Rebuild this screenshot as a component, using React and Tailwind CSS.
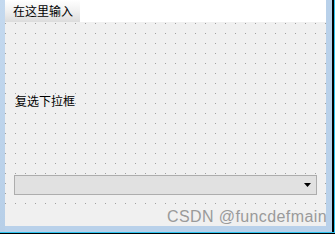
export default function App() {
  return (
    <div className="relative w-[335px] h-[234px] flex flex-col bg-[#b9d1ea] overflow-hidden" style={{ fontFamily: '"Noto Sans CJK SC", "Liberation Sans", sans-serif' }}>
      <div className="flex h-[232px]">
        <div className="w-[5px] bg-[linear-gradient(to_bottom,#c4d9ef,#b7cfe8)]" />
        <div className="flex flex-col w-[321px] h-[226px]">
          <div className="h-[22px] bg-white flex">
            <div className="w-[75px] h-[22px] bg-[linear-gradient(to_bottom,#ffffff,#f2f2f2_45%,#dcdcdc)] flex items-center pl-[8px] text-[12px] leading-[14px] text-black">
              在这里输入
            </div>
          </div>
          <div className="h-[185px] bg-[#f0f0f0] bg-[image:conic-gradient(at_1px_1px,transparent_75%,#a0a0a0_0)] bg-[size:10px_10px] bg-[position:0px_1px] flex flex-col">
            <div className="mt-[72px] pl-[10px] text-[12px] leading-[14px] text-black">复选下拉框</div>
            <div className="mt-[67px] ml-[9px] w-[303px] h-[20px] border border-[#adadad] bg-[#e1e1e1] flex items-center justify-end pr-[5px]">
              <svg width="7" height="4" viewBox="0 0 7 4">
                <polygon points="0,0 7,0 3.5,4" fill="#000" />
              </svg>
            </div>
          </div>
          <div className="flex-1 bg-[#f0f0f0]" />
        </div>
        <div className="w-[6px]" />
        <div className="w-[2px] bg-black" />
        <div className="w-[1px] bg-[#2ec4f0]" />
      </div>
      <div className="h-[1px] bg-[#2ec4f0]" />
      <div className="h-[1px] bg-black" />
      <div className="absolute left-[167px] top-[208px] text-[16px] leading-[18px] tracking-[0.4px] text-[#9a9a9a] whitespace-nowrap" style={{ fontFamily: '"Liberation Sans", Arial, sans-serif' }}>
        CSDN @funcdefmain
      </div>
    </div>
  );
}
